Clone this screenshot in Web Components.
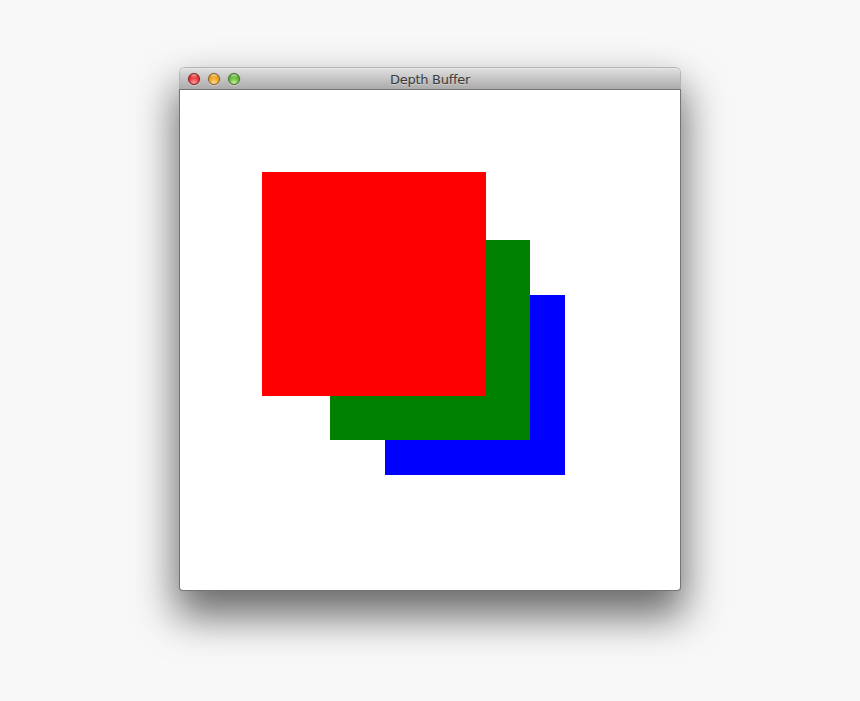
<!DOCTYPE html>
<html><head><meta charset="utf-8">
<style>html,body{margin:0;height:100%;background:#f8f8f8;overflow:hidden}</style>
</head><body>
<mac-desktop>
<mac-window title="Depth Buffer">
<depth-canvas></depth-canvas>
</mac-window>
</mac-desktop>
<script>
class MacDesktop extends HTMLElement{constructor(){super();this.attachShadow({mode:'open'}).innerHTML=`<style>:host{display:block;box-sizing:border-box;width:860px;height:701px;padding:68px 180px 0;background:#f8f8f8}</style><slot></slot>`}}
class TrafficLight extends HTMLElement{constructor(){super();const c=this.getAttribute('color');const p={red:['#7a2326','#f0383c','#ff9a9a','#c42528'],amber:['#86602a','#f2a41f','#ffdc90','#d28a14'],green:['#44702e','#66bb38','#c4eb9c','#4aa02a']}[c];
this.attachShadow({mode:'open'}).innerHTML=`<style>:host{display:block;width:12px;height:12px;border-radius:50%;box-sizing:border-box;border:1px solid ${p[0]};background:radial-gradient(circle at 50% 85%,${p[2]} 0,${p[1]} 50%,${p[3]} 100%);box-shadow:0 1px 0 rgba(255,255,255,.4),0 0 1px rgba(0,0,0,.35);position:relative;overflow:hidden}
.g{position:absolute;left:2px;right:2px;top:0;height:4px;border-radius:50%;background:linear-gradient(rgba(255,255,255,.55),rgba(255,255,255,.05))}</style><div class="g"></div>`}}
class MacWindow extends HTMLElement{constructor(){super();this.attachShadow({mode:'open'}).innerHTML=`<style>
:host{display:block;width:500px;height:522px;border-radius:5px 5px 3px 3px;box-shadow:0 22px 42px 4px rgba(0,0,0,.58);background:#fff}
.bar{box-sizing:border-box;height:22px;display:flex;align-items:center;gap:8px;padding:0 0 1px 8px;position:relative;border-radius:5px 5px 0 0;border-top:1px solid #e6e6e6;background:linear-gradient(#dedede,#c8c8c8 40%,#a9a9a9);box-shadow:0 0 0 1px #b4b4b4}
.t{position:absolute;inset:0;display:flex;align-items:center;justify-content:center;font:13px "DejaVu Sans","Liberation Sans",sans-serif;letter-spacing:-.28px;color:#3a3a3a;text-shadow:0 1px 0 rgba(255,255,255,.35)}
.body{height:500px;background:#fff;border-radius:0 0 3px 3px;position:relative;box-shadow:0 0 0 1px #747474}
</style><div class="bar"><traffic-light color="red"></traffic-light><traffic-light color="amber"></traffic-light><traffic-light color="green"></traffic-light><div class="t"></div></div><div class="body"><slot></slot></div>`;
this.shadowRoot.querySelector('.t').textContent=this.getAttribute('title')}}
class DepthCanvas extends HTMLElement{constructor(){super();this.attachShadow({mode:'open'}).innerHTML=`<style>:host{display:block;position:absolute;inset:0}
div{position:absolute}
.b{left:205px;top:205px;width:180px;height:180px;background:#00f}
.g{left:150px;top:150px;width:200px;height:200px;background:#008000}
.r{left:82px;top:82px;width:224px;height:224px;background:#f00}</style><div class="b"></div><div class="g"></div><div class="r"></div>`}}
customElements.define('traffic-light',TrafficLight);
customElements.define('depth-canvas',DepthCanvas);
customElements.define('mac-window',MacWindow);
customElements.define('mac-desktop',MacDesktop);
</script>
</body></html>
